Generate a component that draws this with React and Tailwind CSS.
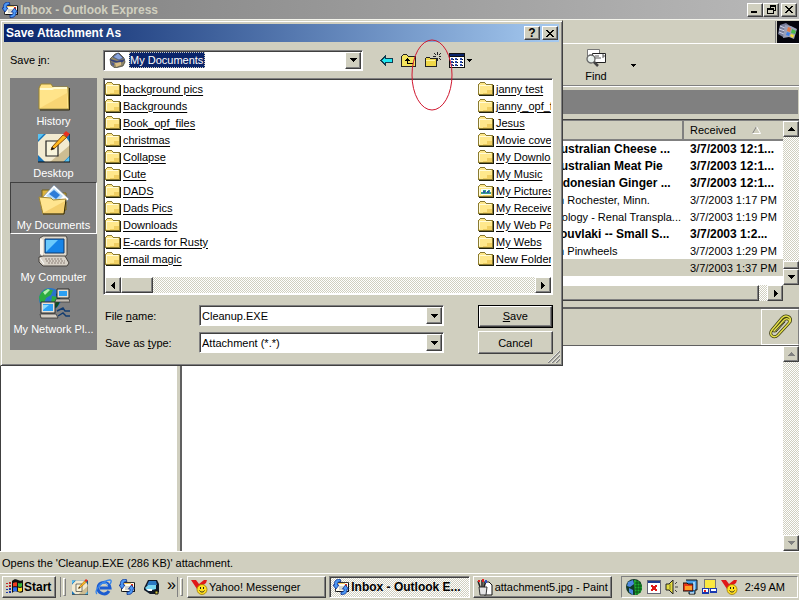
import React, { useState } from "react";

const raised =
  "bg-[#d0cfbf] border border-t-white border-l-white border-r-[#404040] border-b-[#404040] shadow-[inset_-1px_-1px_0_#808080]";
const sunken =
  "border border-t-[#808080] border-l-[#808080] border-r-white border-b-white shadow-[inset_1px_1px_0_#404040] p-px";
const track =
  "bg-[repeating-conic-gradient(#ffffff_0%_25%,#d0cfbf_0%_50%)] bg-[length:2px_2px]";

const leftFiles = [
  "background pics",
  "Backgrounds",
  "Book_opf_files",
  "christmas",
  "Collapse",
  "Cute",
  "DADS",
  "Dads Pics",
  "Downloads",
  "E-cards for Rusty",
  "email magic",
];

const rightFiles = [
  "janny test",
  "janny_opf_f",
  "Jesus",
  "Movie cove",
  "My Downloa",
  "My Music",
  "My Pictures",
  "My Receive",
  "My Web Pa",
  "My Webs",
  "New Folder",
];

const messages = [
  { subject: "Australian Cheese ...", received: "3/7/2003 12:1...", unread: true },
  { subject: "Australian Meat Pie", received: "3/7/2003 12:1...", unread: true },
  { subject: "Indonesian Ginger ...", received: "3/7/2003 12:1...", unread: true },
  { subject: "on Rochester, Minn.", received: "3/7/2003 1:17 PM" },
  { subject: "Biology - Renal Transpla...", received: "3/7/2003 1:19 PM" },
  { subject: "Souvlaki -- Small S...", received: "3/7/2003 1:2...", unread: true },
  { subject: "on Pinwheels", received: "3/7/2003 1:29 PM" },
  { subject: "", received: "3/7/2003 1:37 PM", selected: true },
];

/* ---------- Icons ---------- */

function Arrow({ dir, muted }) {
  const shapes = {
    up: "M4 0h1v1h1v1h1v1h1v1H1V3h1V2h1V1h1z",
    down: "M1 0h7v1H7v1H6v1H5v1H4V3H3V2H2V1H1z",
    left: "M5 0v7H4V6H3V5H2V4H1V3h1V2h1V1h1V0z",
    right: "M2 0v7h1V6h1V5h1V4h1V3H5V2H4V1H3V0z",
  };
  const tall = dir === "left" || dir === "right";
  return (
    <svg width={tall ? 7 : 9} height={tall ? 7 : 4} shapeRendering="crispEdges">
      <path d={shapes[dir]} fill={muted ? "#808080" : "#000"} />
    </svg>
  );
}

function CloseGlyph() {
  return (
    <svg width="8" height="7" shapeRendering="crispEdges">
      <path d="M0 0h2v1h1v1h2V1h1V0h2v1H7v1H6v1H5v1h1v1h1v1h1v1H6V6H5V5H3v1H2v1H0V6h1V5h1V4h1V3H2V2H1V1H0z" />
    </svg>
  );
}

function FolderIcon({ picture }) {
  return (
    <svg width="16" height="15" viewBox="0 0 16 15" shapeRendering="crispEdges" className="shrink-0">
      <path d="M0 3h1V2h1V1h5v1h1v1h7v11H0z" fill="#8a7a30" />
      <path d="M1 3h1V2h5v1h1v1h6v9H1z" fill="#ffe88c" />
      <path d="M1 4h1v8H1zM2 4h11v1H2z" fill="#fffbd8" />
      <path d="M9 9h5v4H5v-1h4z" fill="#f0cf62" />
      <path d="M15 4h1v11H1v-1h14z" fill="#20200c" />
      {picture && (
        <>
          <path d="M3 6h10v6H3z" fill="#f4ffff" />
          <path d="M3 9h2V7h3v2h2V7h2v2h1v2H3z" fill="#3a9a8a" />
          <path d="M5 8h2v2H5zM9 8h2v2H9z" fill="#2858b0" />
        </>
      )}
    </svg>
  );
}

function MailIcon() {
  return (
    <svg width="17" height="16" viewBox="0 0 17 16">
      <path d="M2.500 3.500h13v9h-13z" fill="#fffdf0" stroke="#333" />
      <path d="M15.500 4v8.500H4" fill="none" stroke="#111" />
      <path d="M3 4h9v1H3z" fill="#f8c860" />
      <path d="M12 5h2v3h-2z" fill="#e03018" />
      <path d="M6 8h5M6 10h4" stroke="#a8a8a8" />
      <path d="M7 0C3 0 1 2 1.500 6H0l3 4 3-4H4.500C4 4 5 2.500 8 2.500z" fill="#4c98f4" stroke="#0a2c8c" strokeWidth=".8" />
      <path d="M8 15.500c4 .5 6.500-2 6-5.500H15.500l-3-4-3 4h1.500c.5 2-.5 3-3 3z" fill="#4c98f4" stroke="#0a2c8c" strokeWidth=".8" />
    </svg>
  );
}

function BigFolder() {
  return (
    <svg width="32" height="28" viewBox="0 0 32 28">
      <path d="M1 5l2-4h10l2 3h15l1 22H1z" fill="#ffe48a" stroke="#9a8430" />
      <path d="M2 6h12l2-1h13" fill="none" stroke="#fffbd0" strokeWidth="2" />
      <path d="M2 25L29 10v15z" fill="#f4cc66" opacity=".6" />
      <path d="M31.500 5v22H2" fill="none" stroke="#2c260c" />
    </svg>
  );
}

function DesktopIcon({ size = 32 }) {
  return (
    <svg width={size} height={size} viewBox="0 0 32 32">
      <path d="M0 3h32v28H0z" fill="#1672b8" />
      <path d="M8 3h18l6 9v12l-7 7H7l-7-7V11z" fill="#f2ead0" />
      <path d="M32 14v10l-7 7H12z" fill="#cdbd92" />
      <path d="M0 3h6l-6 6zM32 31v-6l-6 6z" fill="#58c4f4" />
      <path d="M8 10h12v15H8z" fill="#f8f4dc" stroke="#222" strokeWidth="1.200" />
      <path d="M14 16l11-12 4 2-12 11-4 2z" fill="#ffb820" stroke="#7a4000" strokeWidth=".9" />
      <path d="M25 3l3-3 4 3-3 3z" fill="#e83020" />
      <path d="M13 19l1-3 3 2z" fill="#111" />
      <path d="M0 31h32V3" fill="none" stroke="#111" />
    </svg>
  );
}

function DocumentsIcon() {
  return (
    <svg width="32" height="30" viewBox="0 0 32 30">
      <path d="M4 5h8l2 3h14v17H4z" fill="#dcb440" stroke="#75621c" />
      <path d="M16 0l15 14-9 9L5 12z" fill="#fff" stroke="#7088a8" strokeWidth=".7" />
      <path d="M16 3l9 8-5 5-12-5z" fill="#b8dcf8" />
      <path d="M11 9l5-4 6 5-4 4z" fill="#2e7cd8" />
      <path d="M1 12l12 1 2 2 13-1-2 15H5z" fill="#ffe590" stroke="#a38831" />
      <path d="M5 28L27 16l-1 12z" fill="#f0c65e" opacity=".7" />
      <path d="M5 29h21l2-14" fill="none" stroke="#33290a" />
    </svg>
  );
}

function ComputerIcon() {
  return (
    <svg width="32" height="32" viewBox="0 0 32 32">
      <path d="M2 3l3-2h23l1 2v17l-3 2H5z" fill="#ded8cc" stroke="#4c4844" />
      <path d="M2 3l3 2v17l-3-3z" fill="#f8f4ec" />
      <path d="M7 4h19v14H7z" fill="#1684e8" stroke="#103868" />
      <path d="M8 5h12L8 17z" fill="#6ccafc" />
      <path d="M11 22h12v2H11z" fill="#77706a" />
      <path d="M1 22l4-1h22l4 7-2 3H5l-4-4z" fill="#d8d2c8" stroke="#46423e" />
      <path d="M7 24h18M8 26h19M10 28h18" stroke="#8c8078" strokeDasharray="2 1" />
      <path d="M2 23l4 6" stroke="#fff" />
    </svg>
  );
}

function NetworkIcon() {
  return (
    <svg width="32" height="32" viewBox="0 0 32 32">
      <circle cx="12" cy="12" r="11" fill="#2874cc" />
      <path d="M3 6l5-4 7 1-2 5-5 3-2 5-4-1-1-5zM14 9l6 1 1 6-5 5-3-5z" fill="#2cac40" />
      <path d="M20 6c3 5 3 10-2 15l-3-2c4-3 5-7 3-12z" fill="#0c4c20" />
      <path d="M5 5l5-3 2 1-5 5z" fill="#b4f0b0" />
      <path d="M19 2h12v9H19z" fill="#e4dfd4" stroke="#2b2b2b" />
      <path d="M21 4h8v5h-8z" fill="#2ca0f4" />
      <path d="M18 12h13l1 3H17z" fill="#c4beb4" stroke="#333" strokeWidth=".7" />
      <path d="M3 15h14v11H3z" fill="#e8e3d8" stroke="#2b2b2b" />
      <path d="M5 17h10v7H5z" fill="#2ca0f4" />
      <path d="M5 18h6l-6 5z" fill="#8cdcff" />
      <path d="M2 27h16l2 4H3z" fill="#d4cec4" stroke="#333" strokeWidth=".8" />
      <path d="M19 24l6-3 2 3h5M20 29l5-3 3 3h4" fill="none" stroke="#123c70" strokeWidth="1.400" />
    </svg>
  );
}

function MyDocsSmall() {
  return (
    <svg width="17" height="16" viewBox="0 0 17 16">
      <path d="M1 7l2-2 3-3 4-1 5 5 1 4-2 4-8 2-4-3z" fill="#8c8468" stroke="#35352c" strokeWidth=".7" />
      <path d="M4 5l5-4 5 5-4 2z" fill="#8aa4dc" stroke="#2c3c70" strokeWidth=".6" />
      <path d="M1 7l7 2 8-2-2 3-6 1-6-2z" fill="#34427c" />
      <path d="M6 11l6-1v3l-5 2z" fill="#d8bc84" />
      <path d="M2 10l3 1v3l-2-1z" fill="#505a90" />
    </svg>
  );
}

function BackIcon() {
  return (
    <svg width="13" height="11" viewBox="0 0 13 11" shapeRendering="crispEdges">
      <path d="M5 0h1v3h7v5H6v3H5v-1H4V9H3V8H2V7H1V6H0V5h1V4h1V3h1V2h1V1h1z" fill="#103c50" />
      <path d="M4 3h1v1h7v3H5v1H4V7H3V6H2V5h1V4h1z" fill="#20e8f0" />
    </svg>
  );
}

function UpFolderIcon() {
  return (
    <svg width="16" height="15" viewBox="0 0 16 15" shapeRendering="crispEdges">
      <path d="M0 3h1V2h1V1h4v1h1v1h8v11H0z" fill="#222" />
      <path d="M1 3h1V2h4v1h1v1h7v9H1z" fill="#f4e45c" />
      <path d="M6 5h1v1h1v1h1v1H7v2h5v1H6V8H4V7h1V6h1z" fill="#000" />
    </svg>
  );
}

function NewFolderIcon() {
  return (
    <svg width="16" height="16" viewBox="0 0 16 16" shapeRendering="crispEdges">
      <path d="M0 6h1V5h4v1h7v9H0z" fill="#222" />
      <path d="M1 6h4v1h6v7H1z" fill="#f0d848" />
      <path d="M1 8h9v1H1z" fill="#fff6a0" />
      <path d="M12 0h1v3h-1zM12 6h1v3h-1zM8 4h3v1H8zM14 4h2v1h-2zM9 1h1v1H9zM10 2h1v1h-1zM15 1h1v1h-1zM14 2h1v1h-1zM14 6h1v1h-1zM15 7h1v1h-1z" fill="#222" />
    </svg>
  );
}

function ViewsIcon() {
  return (
    <svg width="16" height="15" viewBox="0 0 16 15" shapeRendering="crispEdges">
      <path d="M0 0h16v15H0z" fill="#111" />
      <path d="M1 4h14v10H1z" fill="#fff" />
      <path d="M1 1h14v2H1z" fill="#0a246a" />
      <path d="M2 5h2v2H2zM6 5h2v2H6zM11 5h2v2h-2zM2 8h2v2H2zM6 8h2v2H6zM11 8h2v2h-2zM2 11h2v2H2zM6 11h2v2H6zM11 11h2v2h-2z" fill="#2848a8" />
      <path d="M4 6h1v1H4zM8 6h1v1H8zM13 6h1v1h-1zM4 9h1v1H4zM8 9h1v1H8zM13 9h1v1h-1zM4 12h1v1H4zM8 12h1v1H8zM13 12h1v1h-1z" fill="#111" />
    </svg>
  );
}

function FindIcon() {
  return (
    <svg width="20" height="20" viewBox="0 0 20 20">
      <path d="M1.500 1.500h12v9h-12z" fill="#fff" stroke="#777" />
      <path d="M6.500 5.500h13v9h-13z" fill="#fff" stroke="#222" />
      <path d="M9 8h4M9 10h6M16 7h2v2h-2" stroke="#555" fill="none" />
      <circle cx="5" cy="11" r="4" fill="#e8f0ec" stroke="#666" strokeWidth="1.300" />
      <path d="M8 14l4 4" stroke="#444" strokeWidth="2.500" />
      <path d="M3 10l2-2" stroke="#fff" />
    </svg>
  );
}

function WindowsFlag() {
  return (
    <svg width="17" height="16" viewBox="0 0 17 16">
      <path d="M6 2c2-2 4-2 6-1s3 1 5 0v12c-2 1-3 1-5 0s-4-1-6 1z" fill="#111" />
      <path d="M7 4c2-1 3-1 4-.5v4C10 7 9 7 7 7.500z" fill="#f03c20" />
      <path d="M12 4c2 .5 2 .5 4 0v3.500c-2 .5-2 .5-4 0z" fill="#38b838" />
      <path d="M7 8.500c2-.5 3-.5 4 0v4c-1-.5-2-.5-4 0z" fill="#2c6cf0" />
      <path d="M12 8.500c2 .5 2 .5 4 0V12c-2 .8-2 .8-4 .3z" fill="#fcd820" />
      <path d="M0 4h2v1H0zM3 3h2v2H3zM0 7h2v1H0zM3 6h2v2H3z" fill="#c02828" />
      <path d="M0 10h2v1H0zM3 9h2v2H3zM0 13h2v1H0zM3 12h2v2H3z" fill="#2038a8" />
    </svg>
  );
}

function BrandFlag() {
  return (
    <svg width="22" height="22" viewBox="0 0 22 22" className="bg-[#05050c]">
      <path d="M3 4l6-2 4 3-3 10-4 1-5-3z" fill="#777c98" />
      <path d="M2 8l6 2M2 11l5 2M3 5l5 2" stroke="#d0d4e8" />
      <path d="M8 4l6 1 6 3-3 10-5-2-6 1z" fill="#9aa0b8" />
      <path d="M11 6l3 1-1 4-3-1z" fill="#e87840" />
      <path d="M15 8l4 2-1 3-4-1z" fill="#48b848" />
      <path d="M10 11l3 1-1 3-3-1z" fill="#4080e8" />
      <path d="M14 13l3 1-1 3-3-2z" fill="#f0dc30" />
    </svg>
  );
}

function PaperclipIcon() {
  return (
    <svg width="26" height="26" viewBox="0 0 26 26" fill="none" strokeLinecap="round">
      <path d="M7 17L17 6c3-3 7 0 5 3L11 21c-4 4-10 0-6-5L15 4c4-4 10-1 8 4" stroke="#3c3c10" strokeWidth="3" />
      <path d="M7 17L17 6c3-3 7 0 5 3L11 21c-4 4-10 0-6-5L15 4c4-4 10-1 8 4" stroke="#e4e04c" strokeWidth="1.500" />
      <path d="M9 18l9-10" stroke="#3c3c10" />
    </svg>
  );
}

function ExplorerIcon() {
  return (
    <svg width="17" height="17" viewBox="0 0 17 17" fill="none">
      <path d="M14 12c-3 5-11 3-11-3 0-7 11-8 12 0H5" stroke="#1c5cd0" strokeWidth="3" />
      <path d="M4 7c2-4 7-4 9-1" stroke="#64b4ff" />
      <path d="M2 15C-2 12 8 1 15 1c2 0 1 3 0 4" stroke="#3484ec" strokeWidth="1.300" />
    </svg>
  );
}

function PhoneIcon() {
  return (
    <svg width="17" height="17" viewBox="0 0 17 17">
      <path d="M5 1h9l2 4v8l-3 2H7l-6-4v-2z" fill="#101828" />
      <path d="M6 2h7l1 4H4z" fill="#2b78c4" />
      <path d="M2 9l3-3h8v4l-8 2z" fill="#78d4f0" />
      <path d="M3 10h6v2H6z" fill="#fff" />
      <path d="M12 12h3v3h-3z" fill="#d8cc40" stroke="#111" />
    </svg>
  );
}

function YahooIcon() {
  return (
    <svg width="17" height="17" viewBox="0 0 17 17">
      <path d="M0 1h5l3 4 5-4h3l-1 3-7 5-2 1z" fill="#e01818" />
      <circle cx="11" cy="10.500" r="5" fill="#ffe020" stroke="#a07800" strokeWidth=".8" />
      <path d="M9 8h1v2H9zM12 8h1v2h-1z" fill="#222" />
      <path d="M8.500 11.500c1 2 4 2 5 0" fill="none" stroke="#222" />
    </svg>
  );
}

function PaintIcon() {
  return (
    <svg width="17" height="17" viewBox="0 0 17 17">
      <path d="M7 3h5l3 3v10H7z" fill="#fff" stroke="#111" />
      <path d="M2 8h8l-1 8H3z" fill="#e4e4e4" stroke="#333" />
      <path d="M3 8L1 2M5 8V1M7 8l2-6" stroke="#222" strokeWidth="1.500" />
      <path d="M1 1h2v2H1zM5 0h2v3H5z" fill="#e02020" />
      <path d="M8 1h2v3H8z" fill="#3050c0" />
    </svg>
  );
}

function TrayIcons() {
  return (
    <div className="flex items-center gap-1">
      <svg width="17" height="17" viewBox="0 0 17 17">
        <circle cx="8" cy="8" r="8" fill="#123a2a" />
        <path d="M2 3l5-2 1 4-4 3-3-1zM3 9l4 2v5l-4-3z" fill="#4c88e0" />
        <path d="M8 1c5 0 8 4 8 8s-3 7-7 7z" fill="#20b030" />
        <path d="M9 4h6M9 7h7M9 10h7M9 13h5M11 1v15M14 3v11" stroke="#083c14" strokeWidth=".8" />
      </svg>
      <svg width="14" height="14" viewBox="0 0 14 14" shapeRendering="crispEdges">
        <path d="M0 0h14v14H0z" fill="#667" />
        <path d="M1 3h12v10H1z" fill="#fff" />
        <path d="M1 1h12v2H1z" fill="#1c3c90" />
        <path d="M4 5h2v1h2V5h2v2H9v2h1v2H8v-1H6v1H4V9h1V7H4z" fill="#e01818" />
      </svg>
      <svg width="14" height="16" viewBox="0 0 14 16">
        <path d="M1 5h3l4-4v14l-4-4H1z" fill="#e4dc40" stroke="#222" />
        <path d="M5 5v6" stroke="#807a20" />
        <path d="M10 5l2-2M10 8h3M10 11l2 2" stroke="#444" />
      </svg>
      <svg width="15" height="16" viewBox="0 0 15 16">
        <path d="M3 1h11v10h-2v4H6v-2" fill="#48a0e8" stroke="#111" />
        <path d="M0 4h4l1 1h5v7H0z" fill="#e83818" stroke="#111" />
        <path d="M2 7h7v4H2z" fill="#ffa028" />
        <path d="M11 3v8M7 14h4" stroke="#fff" />
      </svg>
      <svg width="15" height="16" viewBox="0 0 15 16" shapeRendering="crispEdges">
        <path d="M2 0h12v10H2z" fill="#777" />
        <path d="M3 1h10v8H3z" fill="#fbe840" />
        <path d="M0 9h7v6H0zM8 9h7v5H8z" fill="#1838b0" />
        <path d="M1 10h5v3H1zM9 10h5v2H9z" fill="#fff" />
        <path d="M2 11h2v2H2z" fill="#e02020" />
      </svg>
      <YahooIcon />
    </div>
  );
}

/* ---------- Shared controls ---------- */

function ScrollButton({ dir, muted }) {
  return (
    <button
      aria-label={"Scroll " + dir}
      className={`${raised} w-4 h-4 shrink-0 flex items-center justify-center`}
    >
      <Arrow dir={dir} muted={muted} />
    </button>
  );
}

function DropButton({ label }) {
  return (
    <button
      aria-label={label}
      className={`${raised} w-4 self-stretch shrink-0 flex items-center justify-center`}
    >
      <Arrow dir="down" />
    </button>
  );
}

function CaptionButton({ label, children }) {
  return (
    <button
      aria-label={label}
      className={`${raised} w-4 h-[14px] flex items-center justify-center font-bold text-[12px] leading-3`}
    >
      {children}
    </button>
  );
}

/* ---------- Outlook window ---------- */

function MessageList() {
  return (
    <section className="flex flex-col border-t border-[#404040] mt-[5px]">
      <div className="flex border-t border-[#808080]">
        <div className="flex-1 min-w-0 bg-white pb-[9px]">
          <table className="w-full table-fixed border-collapse">
            <thead>
              <tr className="h-[19px] text-left">
                <th aria-label="From" className="p-0 font-normal bg-[#d0cfbf] border-b-2 border-[#808080]"></th>
                <th
                  aria-label="Subject"
                  className="p-0 w-[132px] font-normal bg-[#d0cfbf] border-b-2 border-r-2 border-[#808080]"
                ></th>
                <th className="p-0 pl-[6px] w-[100px] font-normal bg-[#d0cfbf] border-b-2 border-[#808080]">
                  <span className="flex items-center gap-4">
                    Received
                    <svg width="9" height="8" fill="none">
                      <path d="M0.500 7.500L4.500 0.500" stroke="#808080" />
                      <path d="M4.500 0.500L8.500 7.500H0.500" stroke="#fff" />
                    </svg>
                  </span>
                </th>
              </tr>
            </thead>
            <tbody>
              {messages.map((m, idx) => (
                <tr
                  key={idx}
                  className={`h-[17px] whitespace-nowrap ${m.selected ? "bg-[#d0cfbf]" : ""} ${
                    m.unread ? "font-bold text-[12px]" : ""
                  }`}
                >
                  <td className="p-0"></td>
                  <td className="p-0 pl-px">{m.subject}</td>
                  <td className="p-0 pl-[7px]">{m.received}</td>
                </tr>
              ))}
            </tbody>
          </table>
        </div>
        <div className={`${track} w-4 flex flex-col`}>
          <ScrollButton dir="up" />
          <div className="flex-1"></div>
          <div className={`${raised} h-2`}></div>
          <ScrollButton dir="down" />
        </div>
      </div>
      <div className="flex">
        <div className={`${track} flex-1 flex`}>
          <div className={`${raised} flex-1 mr-2`}></div>
          <ScrollButton dir="right" />
        </div>
        <div className="w-4"></div>
      </div>
    </section>
  );
}

function OutlookWindow() {
  return (
    <div className="flex-1 min-h-0 flex flex-col bg-[#d0cfbf]">
      <header className="h-[19px] flex items-center pl-[2px] pr-[2px] bg-linear-to-r from-[#808080] to-[#b9b9b9]">
        <MailIcon />
        <h1 className="flex-1 pl-px font-bold text-[12px] text-[#d0cfbf]">Inbox - Outlook Express</h1>
        <CaptionButton label="Minimize">
          <svg width="8" height="7"><path d="M0 5h6v2H0z" /></svg>
        </CaptionButton>
        <CaptionButton label="Restore">
          <svg width="9" height="9" shapeRendering="crispEdges">
            <path d="M3 0h6v6H7v3H0V3h3zM4 2v1h3v2h1V2zM1 5v3h5V5z" fillRule="evenodd" />
          </svg>
        </CaptionButton>
        <div className="w-[2px]"></div>
        <CaptionButton label="Close">
          <CloseGlyph />
        </CaptionButton>
      </header>

      {/* Menu strip and toolbar */}
      <div className="h-[25px] flex justify-end items-center border-t border-b border-t-[#f4f4ec] border-b-white">
        <div className="border-l border-[#808080] pl-px">
          <BrandFlag />
        </div>
      </div>
      <div className="h-[42px] pl-[574px] flex items-start border-b border-[#808080]">
        <button className="w-11 pt-1 flex flex-col items-center gap-px">
          <FindIcon />
          <span>Find</span>
        </button>
        <button aria-label="Find options" className="mt-5 ml-3">
          <svg width="7" height="4"><path d="M1 0h5v1H5v1H4v1H3V2H2V1H1z" /></svg>
        </button>
      </div>
      <div className="border-t border-white pt-[3px]">
        <div className="h-6 mr-px bg-[#808080]"></div>
      </div>

      <main className="flex-1 min-h-0 flex">
        <aside className="w-[177px] shrink-0 bg-white border-l border-[#404040]"></aside>
        <div className="flex-1 min-w-0 ml-[3px] flex flex-col border-l-2 border-[#606060]">
          <MessageList />
          <div className="mt-[6px] h-[39px] flex justify-end border-t-2 border-b border-[#606060]">
            <button aria-label="Attachments" className="w-[38px] flex items-center justify-center border border-white border-r-[#808080]">
              <PaperclipIcon />
            </button>
          </div>
          <div className="flex-1 min-h-0 flex bg-white">
            <div className="flex-1"></div>
            <div className={`${track} w-4 flex flex-col justify-between`}>
              <ScrollButton dir="up" muted />
              <ScrollButton dir="down" muted />
            </div>
          </div>
        </div>
      </main>
      <footer className="h-[22px] pl-[2px] flex items-center border-t border-white">
        Opens the 'Cleanup.EXE (286 KB)' attachment.
      </footer>
    </div>
  );
}

/* ---------- Save dialog ---------- */

function Place({ icon, label, active }) {
  return (
    <button
      className={`h-[52px] w-full flex flex-col items-center justify-end gap-[2px] text-white border ${
        active
          ? "border-t-[#404040] border-l-[#404040] border-r-white border-b-white"
          : "border-transparent"
      }`}
    >
      {icon}
      <span className="leading-4">{label}</span>
    </button>
  );
}

function FileColumn({ files }) {
  return (
    <ul>
      {files.map((name) => (
        <li key={name} className="h-[17px] flex items-center gap-[2px] whitespace-nowrap">
          <FolderIcon picture={name === "My Pictures"} />
          <a href="#" className="underline underline-offset-2">
            {name}
          </a>
        </li>
      ))}
    </ul>
  );
}

function SaveDialog() {
  const [fileName, setFileName] = useState("Cleanup.EXE");

  return (
    <div
      role="dialog"
      aria-labelledby="dialog-title"
      className="absolute left-0 top-5 w-[70%] bg-[#d0cfbf] border border-t-[#d0cfbf] border-l-[#d0cfbf] border-r-[#404040] border-b-[#404040] shadow-[inset_1px_1px_0_#fff,inset_-1px_-1px_0_#808080] p-[3px]"
    >
      <div className="h-[18px] flex items-center pl-[2px] pr-px bg-linear-to-r from-[#0a246a] to-[#a6caf0]">
        <h2 id="dialog-title" className="flex-1 font-bold text-[12px] text-white">
          Save Attachment As
        </h2>
        <CaptionButton label="Help">?</CaptionButton>
        <div className="w-[2px]"></div>
        <CaptionButton label="Close">
          <CloseGlyph />
        </CaptionButton>
      </div>

      <div className="pl-[6px] pr-[6px] pb-2">
        {/* Location row */}
        <div className="h-9 flex items-center">
          <label htmlFor="save-in" className="w-[93px]">
            Save <u>i</u>n:
          </label>
          <div className={`${sunken} w-[260px] h-[21px] bg-white flex items-center`}>
            <div className="flex-1 flex items-center gap-[3px] pl-1">
              <MyDocsSmall />
              <select
                id="save-in"
                className="appearance-none h-4 px-px bg-[#0a246a] text-white outline-1 outline-dotted outline-[#d0cfbf] -outline-offset-1"
              >
                <option>My Documents</option>
              </select>
            </div>
            <DropButton label="Show locations" />
          </div>
          <div className="flex items-center gap-2 ml-[17px]">
            <button aria-label="Back"><BackIcon /></button>
            <button aria-label="Up one level"><UpFolderIcon /></button>
            <button aria-label="Create new folder"><NewFolderIcon /></button>
            <button aria-label="Views" className="flex items-center gap-[2px]">
              <ViewsIcon />
              <svg width="6" height="3"><path d="M0 0h5v1H4v1H3v1H2V2H1V1H0z" /></svg>
            </button>
          </div>
        </div>

        <div className="flex items-start gap-[6px]">
          <nav className="w-[87px] shrink-0 pb-3 bg-[#808080]">
            <Place icon={<BigFolder />} label="History" />
            <Place icon={<DesktopIcon />} label="Desktop" />
            <Place icon={<DocumentsIcon />} label="My Documents" active />
            <Place icon={<ComputerIcon />} label="My Computer" />
            <Place icon={<NetworkIcon />} label="My Network Pl..." />
          </nav>

          <div className="flex-1 min-w-0">
            <div className={`${sunken} bg-white`}>
              <div className="h-[197px] overflow-hidden grid grid-cols-[373px_1fr]">
                <FileColumn files={leftFiles} />
                <div className="min-w-0 overflow-hidden">
                  <FileColumn files={rightFiles} />
                </div>
              </div>
              <div className={`${track} flex`}>
                <ScrollButton dir="left" />
                <div className={`${raised} w-8`}></div>
                <div className="flex-1"></div>
                <ScrollButton dir="right" />
              </div>
            </div>

            {/* Name, type and actions */}
            <div className="flex justify-between mt-[10px]">
              <div className="flex flex-col gap-[6px] pl-[2px]">
                <div className="flex items-center">
                  <label htmlFor="file-name" className="w-[94px]">
                    File <u>n</u>ame:
                  </label>
                  <div className={`${sunken} w-[245px] h-[21px] bg-white flex`}>
                    <input
                      id="file-name"
                      type="text"
                      value={fileName}
                      onChange={(e) => setFileName(e.target.value)}
                      className="flex-1 min-w-0 pl-px outline-none"
                    />
                    <DropButton label="Recent names" />
                  </div>
                </div>
                <div className="flex items-center">
                  <label htmlFor="file-type" className="w-[94px]">
                    Save as <u>t</u>ype:
                  </label>
                  <div className={`${sunken} w-[245px] h-[21px] bg-white flex`}>
                    <select id="file-type" className="appearance-none flex-1 pl-px outline-none">
                      <option>Attachment (*.*)</option>
                    </select>
                    <DropButton label="Show types" />
                  </div>
                </div>
              </div>
              <div className="flex flex-col gap-[3px] w-[75px]">
                <button className="border border-black">
                  <span className={`${raised} block h-[21px] leading-[18px]`}>
                    <u>S</u>ave
                  </span>
                </button>
                <button className={`${raised} h-[23px]`}>Cancel</button>
              </div>
            </div>
          </div>
        </div>
      </div>

      <svg width="12" height="12" className="absolute right-[2px] bottom-[2px]">
        <path d="M0 12L12 0M4 12l8-8M8 12l4-4" stroke="#808080" strokeWidth="1.500" />
        <path d="M-1 12L11 0M3 12l9-9M7 12l5-5" stroke="#fff" strokeWidth=".7" />
      </svg>
      {/* Hand-drawn ring round the new folder button */}
      <svg width="42" height="72" className="absolute left-[410px] top-[18px] pointer-events-none" fill="none">
        <ellipse cx="21" cy="36" rx="20" ry="35" stroke="#d01830" />
      </svg>
    </div>
  );
}

/* ---------- Taskbar ---------- */

function Divider() {
  return (
    <div className="flex gap-[2px] self-stretch">
      <div className="w-px bg-[#808080]"></div>
      <div className="w-[3px] my-px border border-white border-r-[#808080] border-b-[#808080]"></div>
    </div>
  );
}

function TaskButton({ icon, label, active }) {
  return (
    <button
      className={`flex-1 min-w-0 h-[22px] flex items-center gap-px pl-[3px] whitespace-nowrap ${
        active ? `${track} ${sunken} font-bold text-[12px]` : raised
      }`}
    >
      <span className="shrink-0">{icon}</span>
      <span>{label}</span>
    </button>
  );
}

function Taskbar() {
  return (
    <div className="h-[27px] flex items-center pl-[2px] pr-px bg-[#d0cfbf] border-t border-white">
      <button className={`${raised} h-[22px] w-[54px] flex items-center gap-px pl-[3px] font-bold text-[12px]`}>
        <WindowsFlag />
        Start
      </button>
      <div className="h-5 flex items-center ml-1">
        <Divider />
        <div className="flex items-center gap-[7px] ml-[6px]">
          <button aria-label="Show desktop"><DesktopIcon size={16} /></button>
          <button aria-label="Internet Explorer"><ExplorerIcon /></button>
          <button aria-label="Outlook Express"><MailIcon /></button>
          <button aria-label="Dialer"><PhoneIcon /></button>
          <button className="h-5 pb-1 text-[16px] leading-4">»</button>
        </div>
        <div className="w-px"></div>
        <Divider />
      </div>
      <div className="flex-1 min-w-0 flex gap-[3px] ml-1">
        <TaskButton icon={<YahooIcon />} label="Yahoo! Messenger" />
        <TaskButton icon={<MailIcon />} label="Inbox - Outlook E..." active />
        <TaskButton icon={<PaintIcon />} label="attachment5.jpg - Paint" />
      </div>
      <div className="w-[177px] shrink-0 h-[22px] ml-[9px] pl-1 pr-3 flex items-center justify-between whitespace-nowrap border border-t-[#808080] border-l-[#808080] border-r-white border-b-white">
        <TrayIcons />
        <time>2:49 AM</time>
      </div>
    </div>
  );
}

function App() {
  return (
    <div className="h-screen bg-white pr-[5px] flex flex-col overflow-hidden text-[11px] leading-[14px] text-black font-['Liberation_Sans',Arial,sans-serif] [&_svg]:block">
      <OutlookWindow />
      <Taskbar />
      <SaveDialog />
    </div>
  );
}

export default App;
